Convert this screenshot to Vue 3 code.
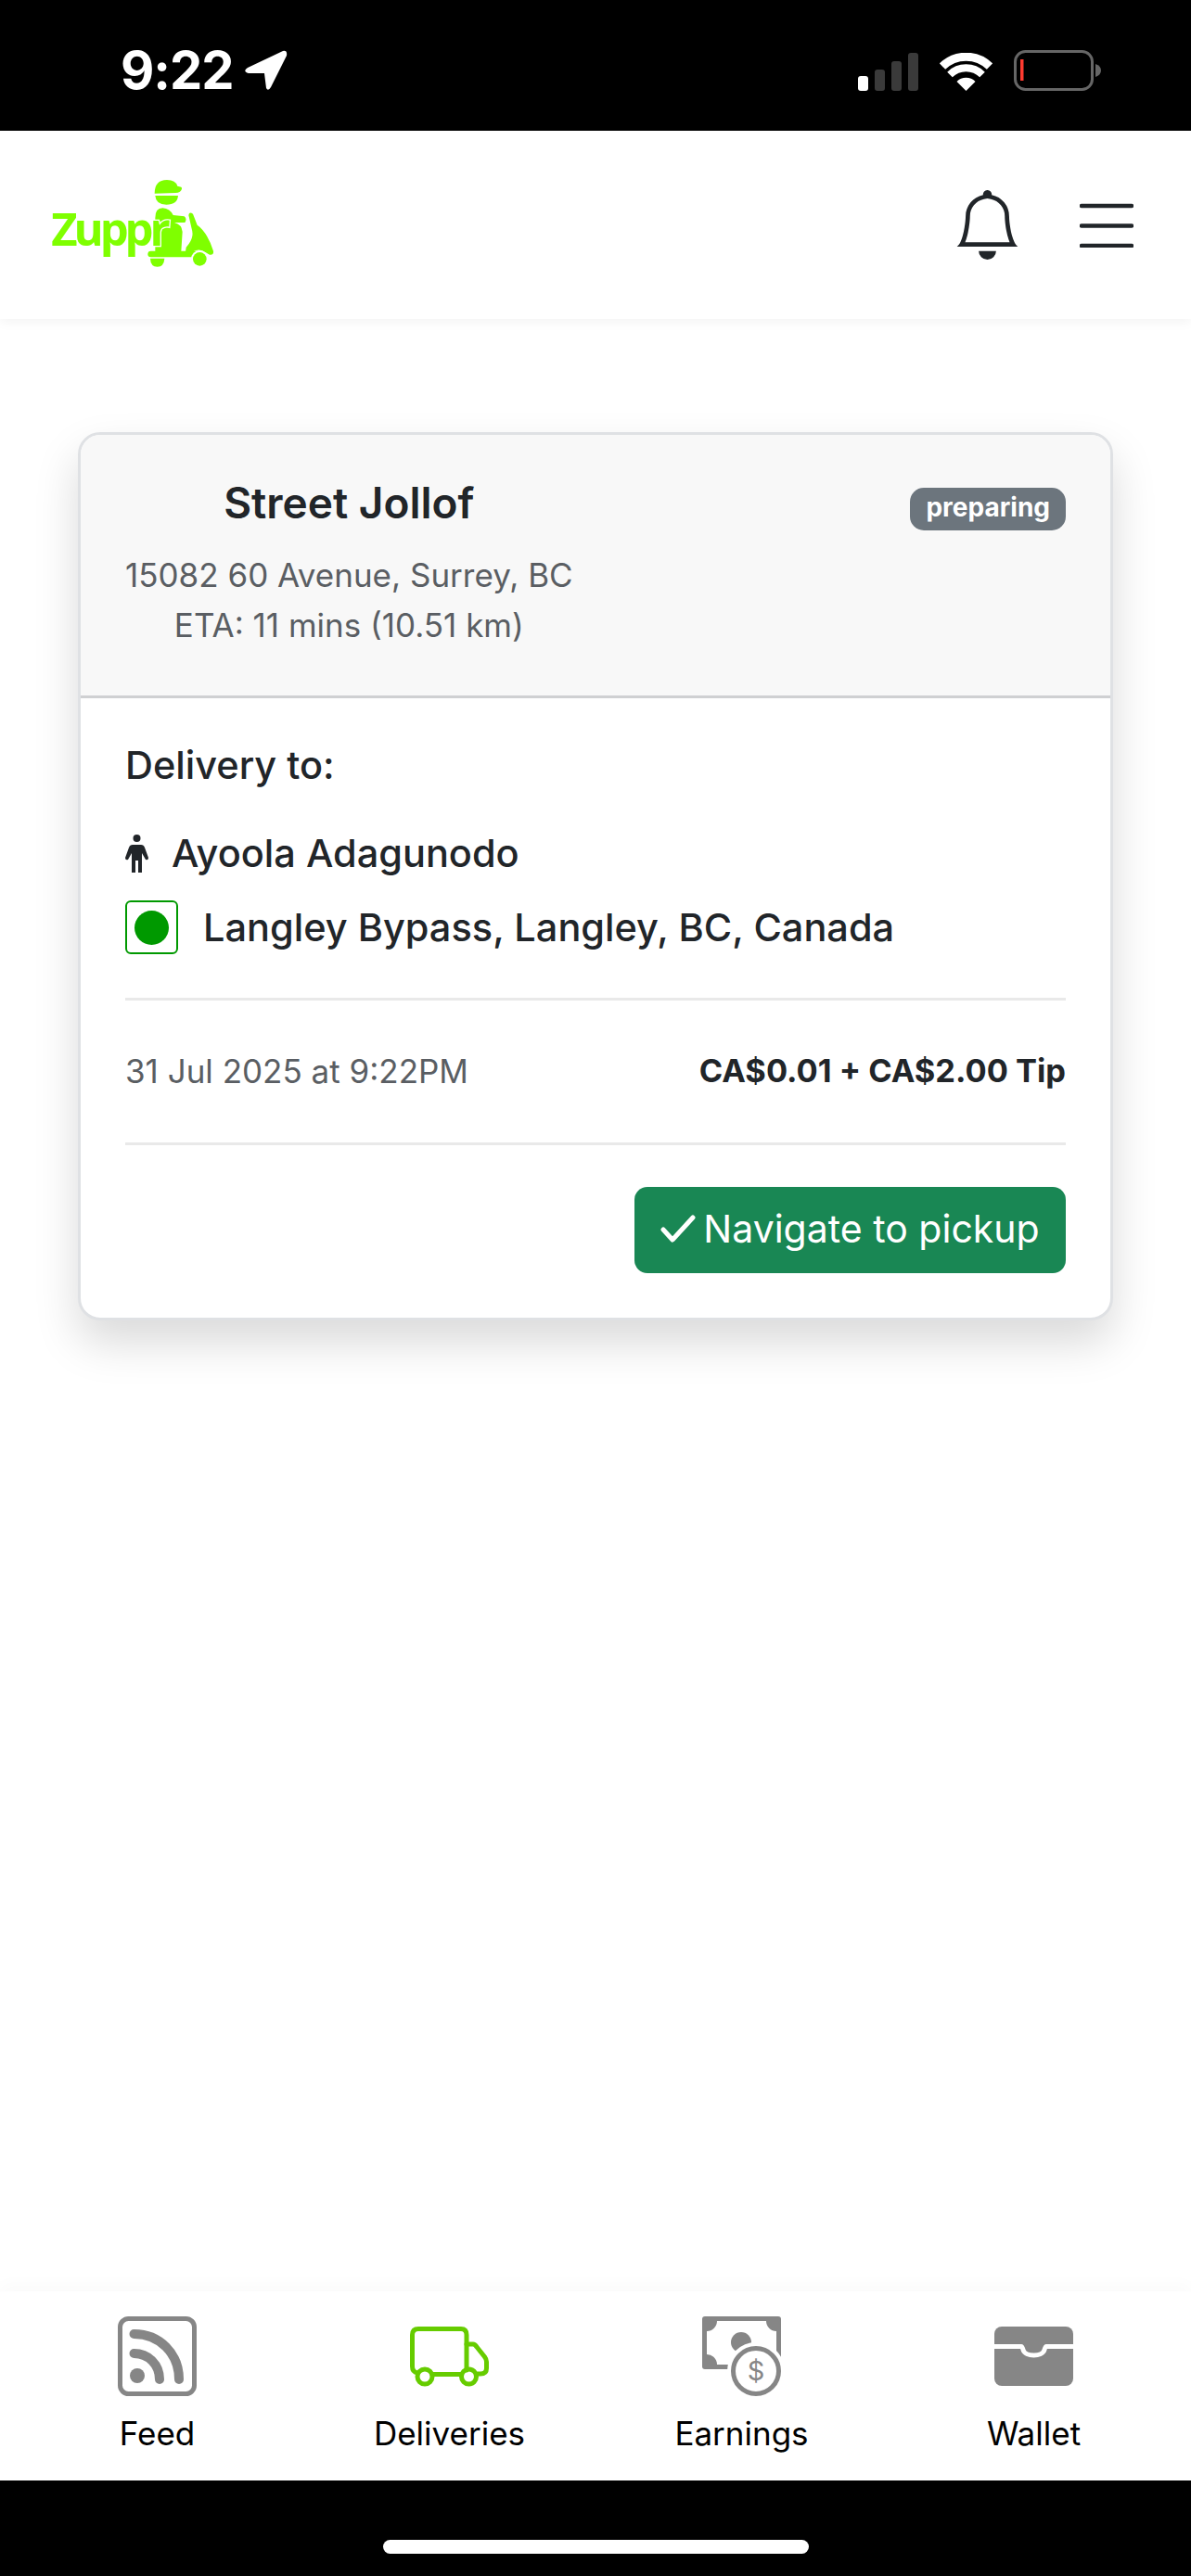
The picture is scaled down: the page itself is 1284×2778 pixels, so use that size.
<template>
  <div class="screen">
    <div class="status-bar">
      <div class="status-left">
        <span class="clock">9:22</span>
        <svg class="arrow" width="48" height="44" viewBox="0 0 48 44">
          <path d="M43 1 L5 19 Q-1 23 6 25 L23 25 L25 41 Q27 45 30 40 L47 6 Q48 0 43 1 Z" fill="#fff" />
        </svg>
      </div>
      <div class="status-right">
        <svg width="65" height="41" viewBox="0 0 65 41">
          <rect x="0" y="25" width="11" height="16" rx="3" fill="#fff" />
          <rect x="18" y="18" width="11" height="23" rx="3" fill="#3a3a3a" />
          <rect x="36" y="9" width="11" height="32" rx="3" fill="#3a3a3a" />
          <rect x="54" y="0" width="11" height="41" rx="3" fill="#3a3a3a" />
        </svg>
        <svg width="57" height="41" viewBox="0 0 57 41">
          <path d="M3 14.6 A36.5 36.5 0 0 1 54 14.6" fill="none" stroke="#fff" stroke-width="9" />
          <path d="M11 23.5 A25 25 0 0 1 46 23.5" fill="none" stroke="#fff" stroke-width="8" />
          <path d="M18.5 31 A14 14 0 0 1 38.5 31 L28.5 41 Z" fill="#fff" />
        </svg>
        <svg width="94" height="44" viewBox="0 0 94 44">
          <rect x="1.5" y="1.5" width="83" height="41" rx="11" fill="none" stroke="#666" stroke-width="3" />
          <rect x="7" y="10" width="3.5" height="23" fill="#ff3b30" />
          <path d="M88 15 Q94 17 94 22 Q94 27 88 29 Z" fill="#666" />
        </svg>
      </div>
    </div>

    <header class="top-nav">
      <svg class="logo" width="220" height="130" viewBox="0 0 660 390">
        <path d="M410 116 Q410 72 450 72 Q478 72 484 92 L496 95 Q502 100 492 110 Q486 114 478 114 Z" fill="#7fff00" />
        <path d="M412 123 H486 Q484 152 448 152 Q414 152 412 123 Z" fill="#7fff00" />
        <path d="M412 304 L412 195 Q412 163 436 163 Q460 165 470 186 L506 190 Q516 198 508 210 H474 Q498 216 500 240 L496 304 Z" fill="#7fff00" />
        <rect x="388" y="302" width="172" height="20" rx="10" fill="#7fff00" />
        <path d="M520 186 Q522 174 534 182 L548 218 Q580 240 600 302 Q602 316 588 314 L574 306 Q556 292 534 304 L520 318 H508 L512 290 Q540 260 530 230 Z" fill="#7fff00" />
        <circle cx="556" cy="328" r="28" fill="#fff" />
        <circle cx="556" cy="328" r="22" fill="#7fff00" />
        <path d="M396 326 H442 Q440 353 419 353 Q397 353 396 326 Z" fill="#7fff00" />
        <text x="76" y="285" class="logo-text" textLength="385">Zuppr</text>
      </svg>
      <div class="nav-icons">
        <svg width="75" height="75" viewBox="0 0 16 16" fill="#212529">
          <path d="M8 16a2 2 0 0 0 2-2H6a2 2 0 0 0 2 2zM8 1.918l-.797.161A4.002 4.002 0 0 0 4 6c0 .628-.134 2.197-.459 3.742-.16.767-.376 1.566-.663 2.258h10.244c-.287-.692-.502-1.49-.663-2.258C12.134 8.197 12 6.628 12 6a4.002 4.002 0 0 0-3.203-3.92L8 1.917zM14.22 12c.223.447.481.801.78 1H1c.299-.199.557-.553.78-1C2.68 10.2 3 6.88 3 6c0-2.42 1.72-4.44 4.005-4.901a1 1 0 1 1 1.99 0A5.002 5.002 0 0 1 13 6c0 .88.32 4.2 1.22 6z" />
        </svg>
        <svg width="58" height="48" viewBox="0 0 58 48">
          <path d="M2 3 H56 M2 24.5 H56 M2 46 H56" stroke="#212529" stroke-width="4.5" stroke-linecap="round" />
        </svg>
      </div>
    </header>

    <main class="content">
      <section class="card">
        <div class="card-header">
          <div class="store">
            <h5 class="store-name">{{ order.store }}</h5>
            <p class="store-line">{{ order.address }}</p>
            <p class="store-line">{{ order.eta }}</p>
          </div>
          <span class="badge">{{ order.status }}</span>
        </div>
        <div class="card-body">
          <h6 class="delivery-title">Delivery to:</h6>
          <div class="info-row person">
            <svg width="25" height="41" viewBox="0 0 25 41" fill="#212529">
              <circle cx="12.5" cy="4" r="4" />
              <path d="M8 11 H17 Q20 11 21 14 L25 25 Q25 28 22 27 L18 20 V41 H14 V28 H11 V41 H7 V20 L3 27 Q0 28 0 25 L4 14 Q5 11 8 11 Z" />
            </svg>
            <span>{{ order.customer }}</span>
          </div>
          <div class="info-row place">
            <span class="place-box"><span class="place-dot"></span></span>
            <span>{{ order.destination }}</span>
          </div>
          <div class="meta-row">
            <span class="meta-date">{{ order.date }}</span>
            <span class="meta-price">{{ order.price }}</span>
          </div>
          <div class="actions">
            <button class="nav-btn">
              <svg width="38" height="30" viewBox="0 0 38 30">
                <path d="M3 16 L13 27 L35 3" fill="none" stroke="#fff" stroke-width="5" stroke-linecap="round" stroke-linejoin="round" />
              </svg>
              Navigate to pickup
            </button>
          </div>
        </div>
      </section>
    </main>

    <nav class="tab-bar">
      <div v-for="tab in tabs" :key="tab.name" class="tab">
        <svg v-if="tab.name === 'Feed'" width="85" height="86" viewBox="0 0 85 86">
          <rect x="2.5" y="2.5" width="80" height="81" rx="9" fill="none" stroke="#868686" stroke-width="5" />
          <circle cx="21" cy="64" r="8" fill="#868686" />
          <path d="M17.5 40 C33 40 45 52 45 68 M17.5 19 C45 19 66 40 66 68" fill="none" stroke="#868686" stroke-width="10" stroke-linecap="round" />
        </svg>
        <svg v-else-if="tab.name === 'Deliveries'" width="85" height="86" viewBox="0 0 85 86">
          <g fill="none" stroke="#66cc00" stroke-width="5" stroke-linecap="round" stroke-linejoin="round">
            <path d="M8 61 Q2.5 60 2.5 54 V20 Q2.5 13.5 9 13.5 H55 Q61 13.5 61 20 V58 M24 62.5 H54" />
            <path d="M61 30 H68 Q70 30 72 33 L80 43 Q82.5 46 82.5 49 V56 Q82.5 62 76 62 H73" />
            <circle cx="16" cy="65" r="8" />
            <circle cx="63.5" cy="65" r="8" />
          </g>
        </svg>
        <svg v-else-if="tab.name === 'Earnings'" width="85" height="86" viewBox="0 0 85 86">
          <rect x="0" y="0" width="85" height="57" rx="3" fill="#868686" />
          <path d="M16 5 H69 A11 11 0 0 0 80 16 V41 A11 11 0 0 0 69 52 H16 A11 11 0 0 0 5 41 V16 A11 11 0 0 0 16 5 Z" fill="#fff" />
          <circle cx="42" cy="28" r="11" fill="#868686" />
          <circle cx="58" cy="59" r="31" fill="#fff" />
          <circle cx="58" cy="59" r="24.5" fill="#fff" stroke="#868686" stroke-width="5" />
          <text x="58" y="69" text-anchor="middle" class="coin">$</text>
        </svg>
        <svg v-else width="85" height="86" viewBox="0 0 85 86">
          <rect x="0" y="11" width="85" height="64" rx="8" fill="#868686" />
          <path d="M0 32.5 H29 Q30 32.5 31 36 C33 44 52 44 54 36 Q55 32.5 56 32.5 H85" fill="none" stroke="#fff" stroke-width="5" />
        </svg>
        <span class="tab-label">{{ tab.name }}</span>
      </div>
    </nav>

    <div class="home-bar"><span class="home-pill"></span></div>
  </div>
</template>

<script setup>
const order = {
  store: 'Street Jollof',
  address: '15082 60 Avenue, Surrey, BC',
  eta: 'ETA: 11 mins (10.51 km)',
  status: 'preparing',
  customer: 'Ayoola Adagunodo',
  destination: 'Langley Bypass, Langley, BC, Canada',
  date: '31 Jul 2025 at 9:22PM',
  price: 'CA$0.01 + CA$2.00 Tip'
}

const tabs = [
  { name: 'Feed' },
  { name: 'Deliveries' },
  { name: 'Earnings' },
  { name: 'Wallet' }
]
</script>

<style>
html, body {
  margin: 0;
  background: #fff;
}
</style>

<style scoped>
.screen {
  width: 1284px;
  height: 2778px;
  display: flex;
  flex-direction: column;
  overflow: hidden;
  font-family: Inter, "Noto Sans", sans-serif;
  color: #212529;
  background: #fff;
}

.status-bar {
  height: 141px;
  flex-shrink: 0;
  background: #000;
  display: flex;
  justify-content: space-between;
  align-items: flex-start;
  padding: 54px 97px 0 130px;
  box-sizing: border-box;
}

.status-left {
  display: flex;
  align-items: center;
  gap: 10px;
}

.clock {
  color: #fff;
  font-size: 56px;
  line-height: 44px;
  font-weight: 700;
  letter-spacing: -1px;
}

.status-right {
  display: flex;
  align-items: flex-end;
  gap: 23px;
}

.top-nav {
  height: 203px;
  flex-shrink: 0;
  display: flex;
  justify-content: space-between;
  align-items: center;
  padding: 0 62px 0 30px;
  box-sizing: border-box;
  background: #fff;
  box-shadow: 0 3px 12px rgba(0, 0, 0, 0.05);
  position: relative;
}

.logo {
  align-self: flex-start;
  margin-top: 29px;
}

.logo-text {
  font-family: "Open Sans", sans-serif;
  font-size: 147px;
  font-weight: 700;
  fill: #7fff00;
  stroke: #fff;
  stroke-width: 8px;
  paint-order: stroke;
}

.nav-icons {
  display: flex;
  align-items: center;
  gap: 62px;
}

.content {
  flex: 1;
  padding: 122px 84px 0;
}

.card {
  border: 3px solid #dfe1e4;
  border-radius: 24px;
  box-shadow: 0 24px 48px rgba(0, 0, 0, 0.15);
  overflow: hidden;
  background: #fff;
}

.card-header {
  display: flex;
  justify-content: space-between;
  align-items: flex-start;
  padding: 40px 48px 49px;
  background: #f8f8f8;
  border-bottom: 3px solid #cfd0d2;
}

.store {
  text-align: center;
}

.store-name {
  margin: 0 0 18px;
  font-size: 46px;
  line-height: 66px;
  font-weight: 600;
}

.store-line {
  margin: 0;
  font-size: 35px;
  line-height: 54px;
  color: #5a5e63;
}

.badge {
  margin-top: 17px;
  padding: 0 17px;
  height: 46px;
  line-height: 42px;
  border-radius: 15px;
  background: #6c757d;
  color: #fff;
  font-size: 28px;
  font-weight: 700;
}

.card-body {
  padding: 42px 48px 48px;
}

.delivery-title {
  margin: 0 0 40px;
  font-size: 41.5px;
  line-height: 60px;
  font-weight: 500;
}

.info-row {
  display: flex;
  align-items: center;
  font-size: 41.5px;
  font-weight: 500;
}

.person {
  gap: 25px;
  height: 50px;
  margin-bottom: 26px;
}

.place {
  gap: 27px;
  height: 58px;
}

.place-box {
  width: 57px;
  height: 58px;
  box-sizing: border-box;
  border: 2px solid #009900;
  border-radius: 6px;
  display: flex;
  align-items: center;
  justify-content: center;
}

.place-dot {
  width: 37px;
  height: 37px;
  border-radius: 50%;
  background: #009900;
}

.meta-row {
  display: flex;
  justify-content: space-between;
  align-items: center;
  margin-top: 47px;
  height: 151px;
  padding-bottom: 2px;
  box-sizing: content-box;
  border-top: 3px solid #e9e9e9;
  border-bottom: 3px solid #e9e9e9;
}

.meta-date {
  font-size: 35px;
  color: #5a5e63;
}

.meta-price {
  font-size: 34.4px;
  font-weight: 700;
}

.actions {
  display: flex;
  justify-content: flex-end;
  margin-top: 45px;
}

.nav-btn {
  display: flex;
  align-items: center;
  gap: 8px;
  width: 465px;
  height: 93px;
  justify-content: center;
  padding-bottom: 4px;
  border: none;
  border-radius: 14px;
  background: #198754;
  color: #fff;
  font-family: inherit;
  font-size: 41px;
}

.tab-bar {
  height: 204px;
  flex-shrink: 0;
  display: grid;
  grid-template-columns: repeat(4, 1fr);
  padding: 27px 12px 0;
  box-sizing: border-box;
  background: #fff;
  box-shadow: 0 -8px 16px rgba(0, 0, 0, 0.02);
  position: relative;
}

.tab {
  display: flex;
  flex-direction: column;
  align-items: center;
}

.coin {
  font-family: Inter, sans-serif;
  font-size: 29px;
  fill: #868686;
}

.tab-label {
  margin-top: 18px;
  font-size: 35px;
  line-height: 44px;
  color: #000;
}

.home-bar {
  height: 103px;
  flex-shrink: 0;
  background: #000;
  display: flex;
  justify-content: center;
  padding-top: 64px;
  box-sizing: border-box;
}

.home-pill {
  width: 459px;
  height: 15px;
  border-radius: 8px;
  background: #fff;
}
</style>
